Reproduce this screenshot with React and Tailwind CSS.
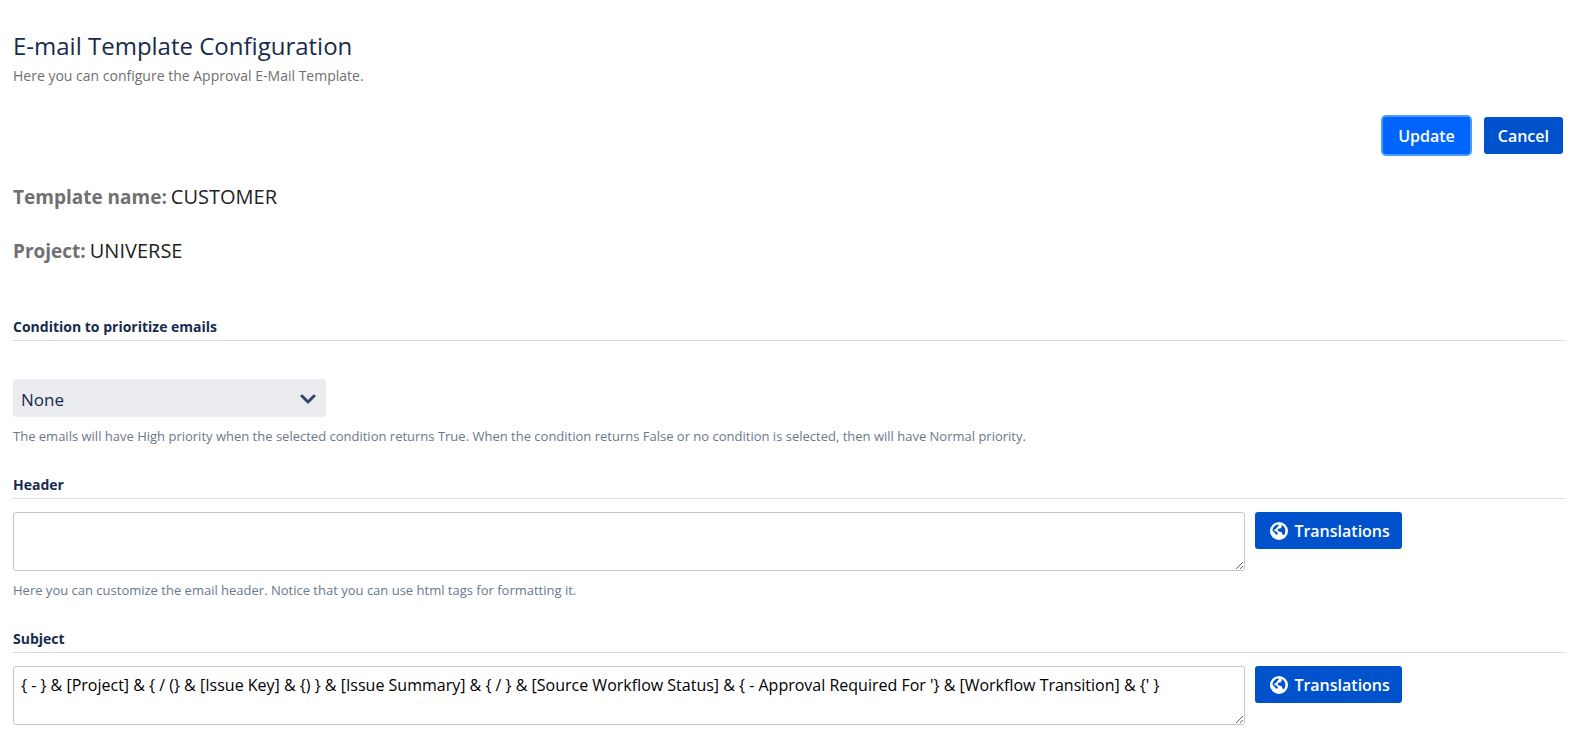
import React, { useState } from 'react';

const subjectText =
  "{ - } & [Project] & { / (} & [Issue Key] & {) } & [Issue Summary] & { / } & [Source Workflow Status] & { - Approval Required For '} & [Workflow Transition] & {' }";

function GlobeIcon() {
  return (
    <svg viewBox="0 0 18 18" className="h-[18px] w-[18px]" aria-hidden="true">
      <circle cx="9" cy="9" r="9" fill="#fff" />
      <path
        d="M2.6 8.8 C2.6 5.6 4.800 3.2 7.600 2.600 L9.200 3.400 L7.400 4.800 L6.400 6.400 L4.600 7.400 L4.200 9 L6.400 9.400 L7.800 11 L7.600 12.400 L5.800 12.400 L4.400 10.600 Z M11.200 2.800 C13.800 3.800 15.400 6.200 15.400 8.800 C15.400 10.600 14.800 12 13.800 13.200 L12.400 12.600 L11.800 10.200 L8.800 9.400 L7.400 8 L8.600 6.800 L10.600 6.200 L11.800 4.800 Z"
        fill="#0052cc"
      />
    </svg>
  );
}

function SectionTitle({ htmlFor, children }) {
  return (
    <h2 className="border-b border-[#dddddd] pb-[3px] text-sm leading-5 font-bold text-[#172b4d]">
      <label htmlFor={htmlFor}>{children}</label>
    </h2>
  );
}

function TranslatedField({ id, title, value, onChange, help }) {
  return (
    <section className="mt-[29px]">
      <SectionTitle htmlFor={id}>{title}</SectionTitle>
      <div className="mt-[13px] flex items-start gap-2.5">
        <textarea
          id={id}
          value={value}
          onChange={(e) => onChange(e.target.value)}
          className="h-[59px] w-[calc(80%-10px)] resize rounded-[3px] border border-[#c1c7d0] px-[7px] py-1.5 text-base leading-6 text-black"
        />
        <button
          type="button"
          className="flex h-[37px] items-center gap-1.5 rounded-[3px] bg-[#0052cc] pr-3 pl-[15px] text-base font-semibold text-white"
        >
          <GlobeIcon />
          Translations
        </button>
      </div>
      {help && <p className="mt-[9px] text-[13px] leading-5 text-[#6b778c]">{help}</p>}
    </section>
  );
}

export default function App() {
  const [condition, setCondition] = useState('none');
  const [header, setHeader] = useState('');
  const [subject, setSubject] = useState(subjectText);

  return (
    <main className="bg-white px-[13px] pt-[30px] font-['Open_Sans','Noto_Sans',sans-serif]">
      <h1 className="text-2xl leading-8 font-medium text-[#172b4d]">E-mail Template Configuration</h1>
      <p className="mt-0.5 text-sm leading-6 text-[#707070]">Here you can configure the Approval E-Mail Template.</p>

      <div className="mt-[29px] mr-[3px] flex justify-end gap-3.5">
        <button
          type="button"
          className="h-[37px] rounded-[3px] bg-[#0065ff] px-[15px] text-base font-semibold text-white ring-2 ring-[#4c9aff]"
        >
          Update
        </button>
        <button type="button" className="h-[37px] rounded-[3px] bg-[#0052cc] px-3.5 text-base font-semibold text-white">
          Cancel
        </button>
      </div>

      <dl className="mt-[29px] flex flex-col gap-[26px] text-xl leading-7">
        <div className="flex items-baseline gap-1">
          <dt className="text-[19px] leading-7 font-bold text-[#707070]">Template name:</dt>
          <dd className="text-[#222222]">CUSTOMER</dd>
        </div>
        <div className="flex items-baseline gap-1">
          <dt className="text-[19px] leading-7 font-bold text-[#707070]">Project:</dt>
          <dd className="text-[#222222]">UNIVERSE</dd>
        </div>
      </dl>

      <section className="mt-[52px]">
        <SectionTitle htmlFor="condition">Condition to prioritize emails</SectionTitle>
        <div className="relative mt-[38px] w-[313px]">
          <select
            id="condition"
            value={condition}
            onChange={(e) => setCondition(e.target.value)}
            className="block h-[38px] w-full appearance-none rounded-[3px] bg-[#ebecf0] px-2 pt-1 text-[17px] leading-6 text-[#172b4d]"
          >
            <option value="none">None</option>
          </select>
          <svg
            viewBox="0 0 16 10"
            className="pointer-events-none absolute top-[15px] right-[10px] h-2.5 w-4"
            fill="none"
            stroke="#344563"
            strokeWidth="3"
            strokeLinecap="round"
            strokeLinejoin="round"
            aria-hidden="true"
          >
            <path d="M2 2l6 6 6-6" />
          </svg>
        </div>
        <p className="mt-[9px] text-[13px] leading-5 text-[#6b778c]">
          The emails will have High priority when the selected condition returns True. When the condition returns False
          or no condition is selected, then will have Normal priority.
        </p>
      </section>

      <TranslatedField
        id="header"
        title="Header"
        value={header}
        onChange={setHeader}
        help="Here you can customize the email header. Notice that you can use html tags for formatting it."
      />
      <TranslatedField id="subject" title="Subject" value={subject} onChange={setSubject} />
    </main>
  );
}
